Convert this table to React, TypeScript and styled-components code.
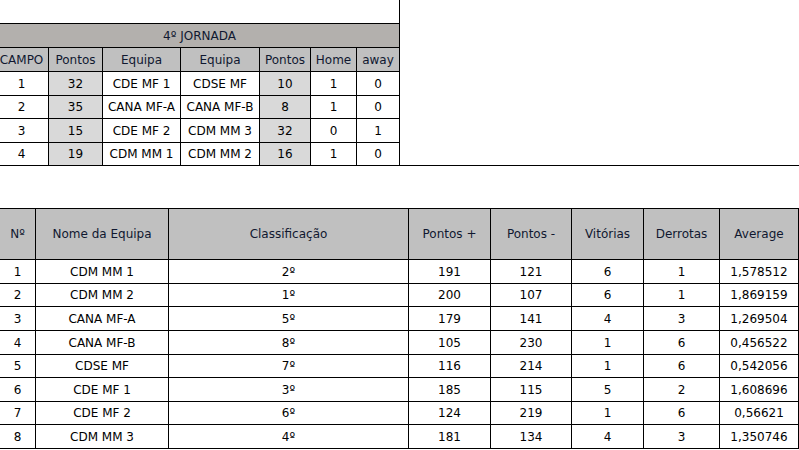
import styled, { createGlobalStyle } from 'styled-components';

const GlobalStyle = createGlobalStyle`
  body {
    margin: 0;
    background: #fff;
    font-family: 'DejaVu Sans', 'Liberation Sans', sans-serif;
    font-size: 12px;
    color: #000;
  }
`;

const Page = styled.div`
  width: 799px;
  height: 450px;
  overflow: hidden;
`;

const TopSection = styled.div`
  display: flex;
  height: 165px;
  border-bottom: 1px solid #000;
`;

const JornadaPanel = styled.div`
  width: 399px;
  border-right: 1px solid #000;
  padding-top: 23px;
`;

const JornadaGrid = styled.div`
  display: grid;
  grid-template-columns: 49px 54px 78px 79px 51px 46px 42px;
  grid-template-rows: 24px 24px 24px 23px 24px 22px;
  border-top: 1px solid #000;
`;

const TitleCell = styled.div`
  grid-column: 1 / -1;
  display: flex;
  align-items: center;
  justify-content: center;
  background: #b3b0ad;
  border-bottom: 1px solid #000;
  color: #101830;
`;

const Cell = styled.div<{
  $shade?: 'head' | 'light';
  $last?: boolean;
  $bottom?: boolean;
  $first?: boolean;
}>`
  display: flex;
  align-items: center;
  justify-content: center;
  white-space: nowrap;
  padding-right: ${(p) => (p.$first ? '5px' : '0')};
  border-right: ${(p) => (p.$last ? 'none' : '1px solid #000')};
  border-bottom: ${(p) => (p.$bottom ? 'none' : '1px solid #000')};
  background: ${(p) =>
    p.$shade === 'head' ? '#c0c0c0' : p.$shade === 'light' ? '#d9d9d9' : '#fff'};
  color: ${(p) => (p.$shade === 'head' ? '#101830' : '#000')};
`;

const StandingsGrid = styled.div`
  display: grid;
  grid-template-columns: 36px 133px 240px 82px 81px 72px 76px 79px;
  grid-template-rows: 51px 24px 23px 24px 24px 23px 24px 23px 24px;
  border-top: 1px solid #000;
  margin-top: 42px;
`;

const jornadaHead = ['CAMPO', 'Pontos', 'Equipa', 'Equipa', 'Pontos', 'Home', 'away'];

const jogos = [
  ['1', '32', 'CDE MF 1', 'CDSE MF', '10', '1', '0'],
  ['2', '35', 'CANA MF-A', 'CANA MF-B', '8', '1', '0'],
  ['3', '15', 'CDE MF 2', 'CDM MM 3', '32', '0', '1'],
  ['4', '19', 'CDM MM 1', 'CDM MM 2', '16', '1', '0'],
];

const standingsHead = [
  'Nº',
  'Nome da Equipa',
  'Classificação',
  'Pontos +',
  'Pontos -',
  'Vitórias',
  'Derrotas',
  'Average',
];

const equipas = [
  ['1', 'CDM MM 1', '2º', '191', '121', '6', '1', '1,578512'],
  ['2', 'CDM MM 2', '1º', '200', '107', '6', '1', '1,869159'],
  ['3', 'CANA MF-A', '5º', '179', '141', '4', '3', '1,269504'],
  ['4', 'CANA MF-B', '8º', '105', '230', '1', '6', '0,456522'],
  ['5', 'CDSE MF', '7º', '116', '214', '1', '6', '0,542056'],
  ['6', 'CDE MF 1', '3º', '185', '115', '5', '2', '1,608696'],
  ['7', 'CDE MF 2', '6º', '124', '219', '1', '6', '0,56621'],
  ['8', 'CDM MM 3', '4º', '181', '134', '4', '3', '1,350746'],
];

function App() {
  return (
    <Page>
      <GlobalStyle />
      <TopSection>
        <JornadaPanel>
          <JornadaGrid>
            <TitleCell>4º JORNADA</TitleCell>
            {jornadaHead.map((h, i) => (
              <Cell key={'h' + i} $shade="head" $last={i === 6} $first={i === 0}>
                {h}
              </Cell>
            ))}
            {jogos.map((row, r) =>
              row.map((v, i) => (
                <Cell
                  key={r + '-' + i}
                  $shade={i === 1 || i === 4 ? 'light' : undefined}
                  $last={i === 6}
                  $first={i === 0}
                  $bottom={r === jogos.length - 1}
                >
                  {v}
                </Cell>
              ))
            )}
          </JornadaGrid>
        </JornadaPanel>
      </TopSection>
      <StandingsGrid>
        {standingsHead.map((h, i) => (
          <Cell key={'s' + i} $shade="head">
            {h}
          </Cell>
        ))}
        {equipas.map((row, r) =>
          row.map((v, i) => <Cell key={r + '-' + i}>{v}</Cell>)
        )}
      </StandingsGrid>
    </Page>
  );
}

export default App;
